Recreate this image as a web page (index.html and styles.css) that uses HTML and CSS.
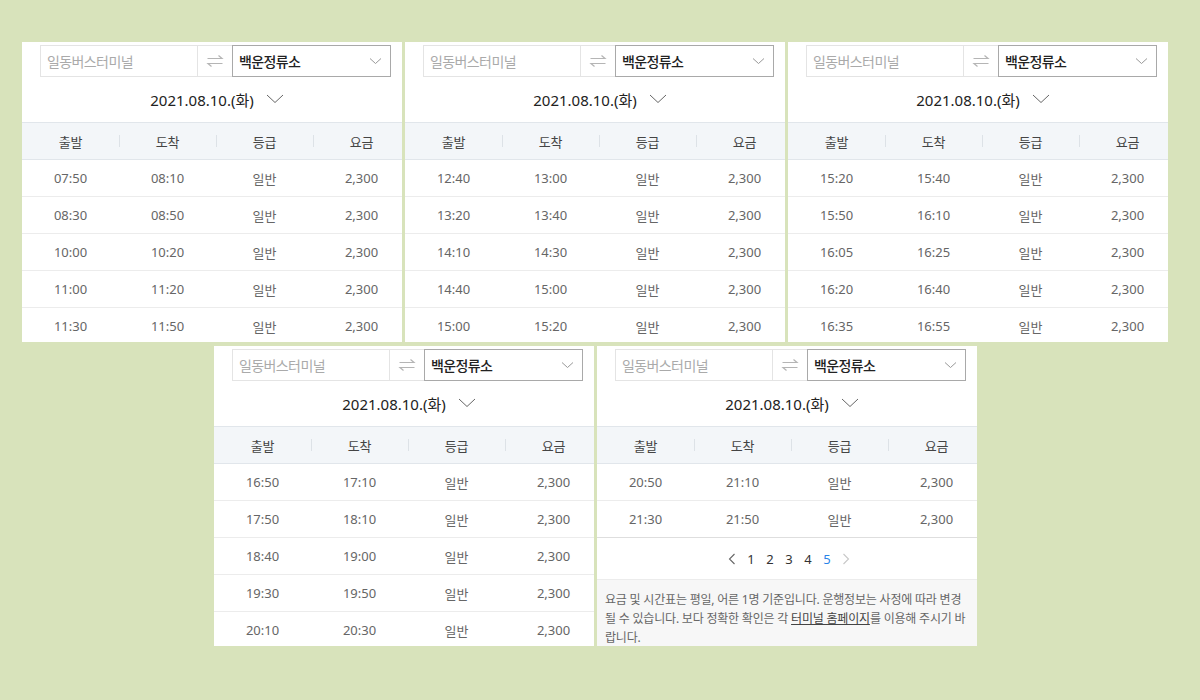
FILE: index.html
```html
<!DOCTYPE html>
<html lang="ko">
<head>
<meta charset="utf-8">
<title>시간표</title>
<link rel="stylesheet" href="styles.css">
</head>
<body>
<div class="board">
 <div class="line line-top">

  <section class="panel">
    <div class="search">
      <div class="from">일동버스터미널</div>
      <div class="swap"><svg width="18" height="14" viewBox="0 0 18 14"><path d="M1.5 4.5H16L12.5 1.5M16.5 9.5H2L5.5 12.5" fill="none" stroke="#b5b5b5" stroke-width="1.2"/></svg></div>
      <div class="to"><span>백운정류소</span><svg width="13" height="8" viewBox="0 0 13 8"><path d="M1 1.5L6.5 6.5L12 1.5" fill="none" stroke="#999" stroke-width="1"/></svg></div>
    </div>
    <div class="date"><span>2021.08.10.(화)</span><svg width="18" height="10" viewBox="0 0 18 10"><path d="M1 1L9 8.5L17 1" fill="none" stroke="#666" stroke-width="1"/></svg></div>
    <div class="thead"><span>출발</span><span>도착</span><span>등급</span><span>요금</span></div>
    <div class="row"><span>07:50</span><span>08:10</span><span>일반</span><span>2,300</span></div>
    <div class="row"><span>08:30</span><span>08:50</span><span>일반</span><span>2,300</span></div>
    <div class="row"><span>10:00</span><span>10:20</span><span>일반</span><span>2,300</span></div>
    <div class="row"><span>11:00</span><span>11:20</span><span>일반</span><span>2,300</span></div>
    <div class="row"><span>11:30</span><span>11:50</span><span>일반</span><span>2,300</span></div>
  </section>

  <section class="panel">
    <div class="search">
      <div class="from">일동버스터미널</div>
      <div class="swap"><svg width="18" height="14" viewBox="0 0 18 14"><path d="M1.5 4.5H16L12.5 1.5M16.5 9.5H2L5.5 12.5" fill="none" stroke="#b5b5b5" stroke-width="1.2"/></svg></div>
      <div class="to"><span>백운정류소</span><svg width="13" height="8" viewBox="0 0 13 8"><path d="M1 1.5L6.5 6.5L12 1.5" fill="none" stroke="#999" stroke-width="1"/></svg></div>
    </div>
    <div class="date"><span>2021.08.10.(화)</span><svg width="18" height="10" viewBox="0 0 18 10"><path d="M1 1L9 8.5L17 1" fill="none" stroke="#666" stroke-width="1"/></svg></div>
    <div class="thead"><span>출발</span><span>도착</span><span>등급</span><span>요금</span></div>
    <div class="row"><span>12:40</span><span>13:00</span><span>일반</span><span>2,300</span></div>
    <div class="row"><span>13:20</span><span>13:40</span><span>일반</span><span>2,300</span></div>
    <div class="row"><span>14:10</span><span>14:30</span><span>일반</span><span>2,300</span></div>
    <div class="row"><span>14:40</span><span>15:00</span><span>일반</span><span>2,300</span></div>
    <div class="row"><span>15:00</span><span>15:20</span><span>일반</span><span>2,300</span></div>
  </section>

  <section class="panel">
    <div class="search">
      <div class="from">일동버스터미널</div>
      <div class="swap"><svg width="18" height="14" viewBox="0 0 18 14"><path d="M1.5 4.5H16L12.5 1.5M16.5 9.5H2L5.5 12.5" fill="none" stroke="#b5b5b5" stroke-width="1.2"/></svg></div>
      <div class="to"><span>백운정류소</span><svg width="13" height="8" viewBox="0 0 13 8"><path d="M1 1.5L6.5 6.5L12 1.5" fill="none" stroke="#999" stroke-width="1"/></svg></div>
    </div>
    <div class="date"><span>2021.08.10.(화)</span><svg width="18" height="10" viewBox="0 0 18 10"><path d="M1 1L9 8.5L17 1" fill="none" stroke="#666" stroke-width="1"/></svg></div>
    <div class="thead"><span>출발</span><span>도착</span><span>등급</span><span>요금</span></div>
    <div class="row"><span>15:20</span><span>15:40</span><span>일반</span><span>2,300</span></div>
    <div class="row"><span>15:50</span><span>16:10</span><span>일반</span><span>2,300</span></div>
    <div class="row"><span>16:05</span><span>16:25</span><span>일반</span><span>2,300</span></div>
    <div class="row"><span>16:20</span><span>16:40</span><span>일반</span><span>2,300</span></div>
    <div class="row"><span>16:35</span><span>16:55</span><span>일반</span><span>2,300</span></div>
  </section>

 </div>
 <div class="line line-bottom">

  <section class="panel">
    <div class="search">
      <div class="from">일동버스터미널</div>
      <div class="swap"><svg width="18" height="14" viewBox="0 0 18 14"><path d="M1.5 4.5H16L12.5 1.5M16.5 9.5H2L5.5 12.5" fill="none" stroke="#b5b5b5" stroke-width="1.2"/></svg></div>
      <div class="to"><span>백운정류소</span><svg width="13" height="8" viewBox="0 0 13 8"><path d="M1 1.5L6.5 6.5L12 1.5" fill="none" stroke="#999" stroke-width="1"/></svg></div>
    </div>
    <div class="date"><span>2021.08.10.(화)</span><svg width="18" height="10" viewBox="0 0 18 10"><path d="M1 1L9 8.5L17 1" fill="none" stroke="#666" stroke-width="1"/></svg></div>
    <div class="thead"><span>출발</span><span>도착</span><span>등급</span><span>요금</span></div>
    <div class="row"><span>16:50</span><span>17:10</span><span>일반</span><span>2,300</span></div>
    <div class="row"><span>17:50</span><span>18:10</span><span>일반</span><span>2,300</span></div>
    <div class="row"><span>18:40</span><span>19:00</span><span>일반</span><span>2,300</span></div>
    <div class="row"><span>19:30</span><span>19:50</span><span>일반</span><span>2,300</span></div>
    <div class="row"><span>20:10</span><span>20:30</span><span>일반</span><span>2,300</span></div>
  </section>

  <section class="panel">
    <div class="search">
      <div class="from">일동버스터미널</div>
      <div class="swap"><svg width="18" height="14" viewBox="0 0 18 14"><path d="M1.5 4.5H16L12.5 1.5M16.5 9.5H2L5.5 12.5" fill="none" stroke="#b5b5b5" stroke-width="1.2"/></svg></div>
      <div class="to"><span>백운정류소</span><svg width="13" height="8" viewBox="0 0 13 8"><path d="M1 1.5L6.5 6.5L12 1.5" fill="none" stroke="#999" stroke-width="1"/></svg></div>
    </div>
    <div class="date"><span>2021.08.10.(화)</span><svg width="18" height="10" viewBox="0 0 18 10"><path d="M1 1L9 8.5L17 1" fill="none" stroke="#666" stroke-width="1"/></svg></div>
    <div class="thead"><span>출발</span><span>도착</span><span>등급</span><span>요금</span></div>
    <div class="row"><span>20:50</span><span>21:10</span><span>일반</span><span>2,300</span></div>
    <div class="row last"><span>21:30</span><span>21:50</span><span>일반</span><span>2,300</span></div>
    <nav class="pager">
      <span class="arrow"><svg width="8" height="12" viewBox="0 0 8 12"><path d="M6.5 1L1.5 6L6.5 11" fill="none" stroke="#666" stroke-width="1.1"/></svg></span>
      <span>1</span><span>2</span><span>3</span><span>4</span><span class="current">5</span>
      <span class="arrow"><svg width="8" height="12" viewBox="0 0 8 12"><path d="M1.5 1L6.5 6L1.5 11" fill="none" stroke="#c8c8c8" stroke-width="1.1"/></svg></span>
    </nav>
    <p class="notice">요금 및 시간표는 평일, 어른 1명 기준입니다. 운행정보는 사정에 따라 변경될 수 있습니다. 보다 정확한 확인은 각 <a href="#">터미널 홈페이지</a>를 이용해 주시기 바랍니다.</p>
  </section>

 </div>
</div>
</body>
</html>
```

FILE: styles.css
```css
* { box-sizing: border-box; }

html, body {
  margin: 0;
  padding: 0;
}

body {
  background: #d8e3bb;
  width: 1200px;
  height: 700px;
  overflow: hidden;
  font-family: "Noto Sans", "Noto Sans CJK KR", sans-serif;
  color: #333;
}

.board {
  padding-top: 42px;
  display: flex;
  flex-direction: column;
  gap: 4px;
}

.line {
  display: flex;
  gap: 3px;
}

.line-top { padding-left: 22px; }
.line-bottom { padding-left: 214px; }

.panel {
  width: 380px;
  height: 300px;
  background: #fff;
  overflow: hidden;
  display: flex;
  flex-direction: column;
  flex: none;
}

.panel > * { flex: none; width: 390px; }

.search {
  display: flex;
  height: 32px;
  margin-top: 3px;
  padding-left: 18px;
}

.from {
  width: 158px;
  border: 1px solid #e4e4e4;
  display: flex;
  align-items: center;
  padding-left: 6px;
  font-size: 14px;
  letter-spacing: -0.6px;
  color: #aaa;
}

.swap {
  width: 34px;
  border-top: 1px solid #e4e4e4;
  border-bottom: 1px solid #e4e4e4;
  display: flex;
  align-items: center;
  justify-content: center;
}

.to {
  width: 159px;
  border: 1px solid #a9a9a9;
  display: flex;
  align-items: center;
  justify-content: space-between;
  padding: 0 8px 0 6px;
  font-size: 14px;
  font-weight: 500;
  letter-spacing: -0.6px;
  color: #222;
}

.date {
  height: 45px;
  display: flex;
  align-items: center;
  justify-content: center;
  gap: 12px;
  font-size: 15px;
  color: #222;
}

.date svg { margin-top: -2px; }

.thead, .row {
  display: grid;
  grid-template-columns: repeat(4, 97px);
  align-items: center;
  font-size: 13px;
}

.thead {
  height: 38px;
  background: #f3f6f9;
  border-top: 1px solid #e1e6eb;
  border-bottom: 1px solid #e1e6eb;
  color: #444;
  letter-spacing: -0.3px;
}

.thead span {
  text-align: center;
  position: relative;
}

.thead span + span::before {
  content: "";
  position: absolute;
  left: 0;
  top: 50%;
  margin-top: -6px;
  height: 12px;
  border-left: 1px solid #dde2e7;
}

.row {
  height: 37px;
  border-bottom: 1px solid #ececec;
  color: #666;
}

.row span { text-align: center; }

.row.last { border-bottom-color: #dedede; }

.pager {
  height: 41px;
  display: flex;
  align-items: center;
  justify-content: center;
  padding-right: 6px;
  font-size: 13px;
  color: #333;
}

.pager span {
  width: 19px;
  display: flex;
  justify-content: center;
  align-items: center;
}

.pager .current { color: #2a84e8; }

.notice {
  margin: 0;
  width: 380px !important;
  flex: 1 0 auto;
  background: #f7f7f7;
  border-top: 1px solid #ececec;
  padding: 10px 8px 0 8px;
  font-size: 12px;
  line-height: 19px;
  letter-spacing: -0.2px;
  word-break: break-all;
  color: #666;
}

.notice a {
  color: #444;
  text-decoration: underline;
}
```
